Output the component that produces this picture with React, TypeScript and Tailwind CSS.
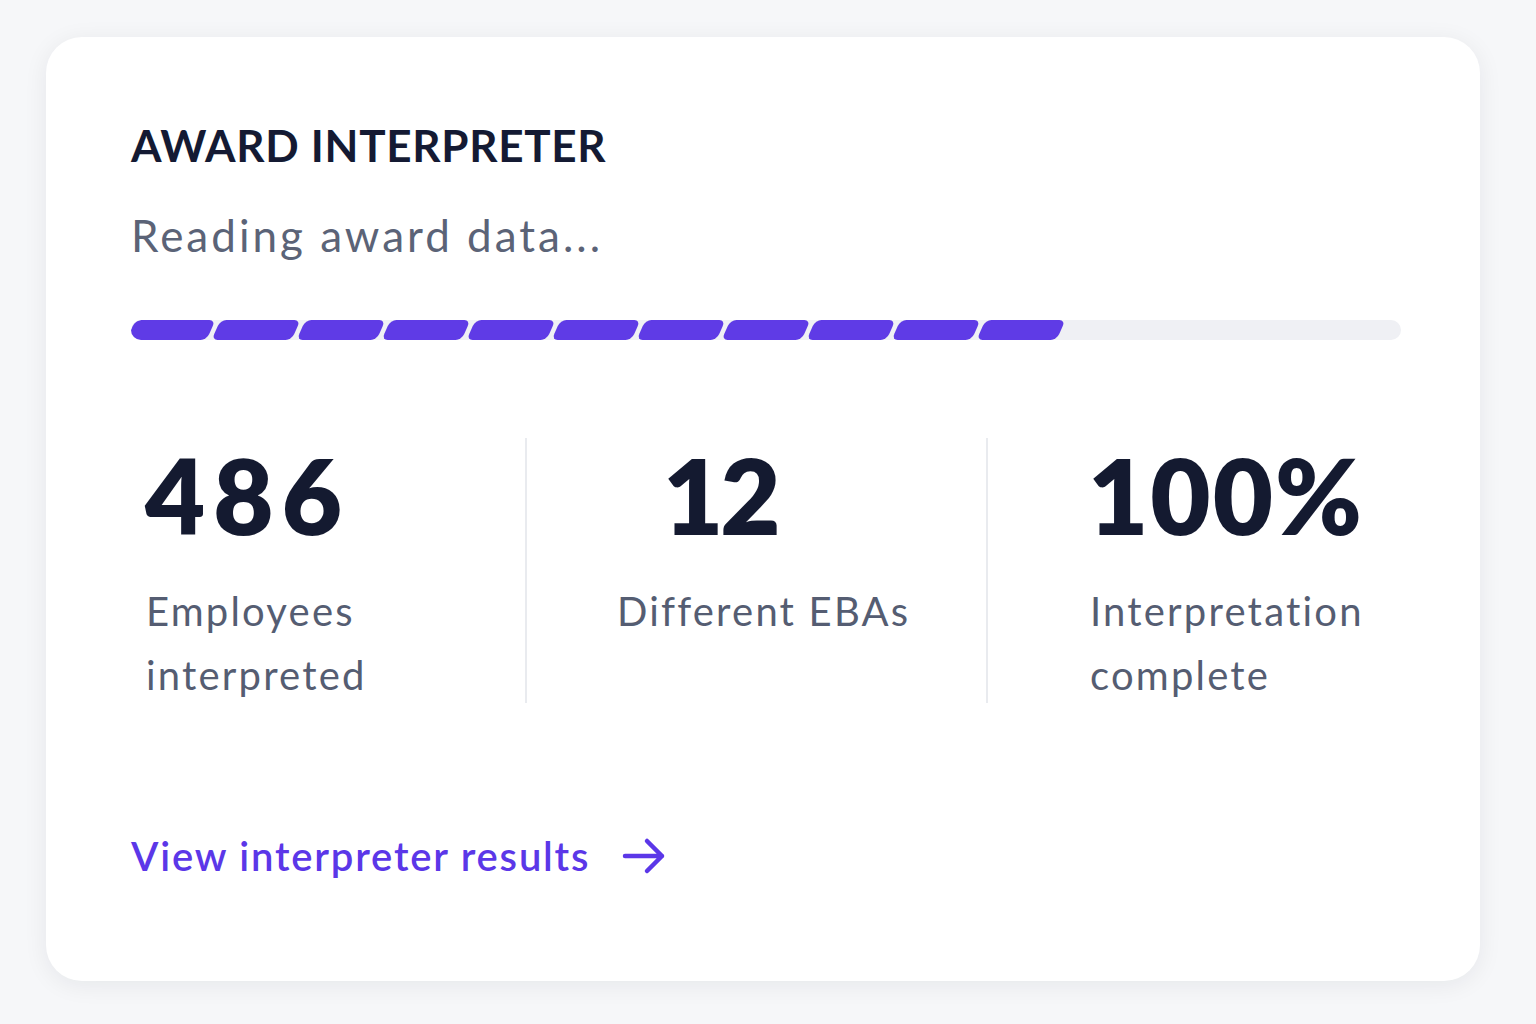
import React from "react";

const segs = Array.from({ length: 11 });

function Stat({
  value,
  lines,
  numCls,
  labelPad,
}: {
  value: string;
  lines: string[];
  numCls: string;
  labelPad: string;
}) {
  return (
    <div className="flex flex-col pt-[5px]">
      <div className={`text-[104px] leading-[104px] font-extrabold text-[#141a30] ${numCls}`}>
        {value}
      </div>
      <div className={`mt-[32px] text-[40px] leading-[64px] tracking-[2.2px] text-[#555d72] ${labelPad}`}>
        {lines.map((l) => (
          <div key={l}>{l}</div>
        ))}
      </div>
    </div>
  );
}

export default function App() {
  return (
    <div
      className="min-h-[1024px] w-[1536px] bg-[#f6f7f9] pt-[37px] pl-[46px]"
      style={{ fontFamily: "Lato, 'Noto Sans', sans-serif" }}
    >
      <div className="w-[1434px] h-[944px] rounded-[36px] bg-white shadow-[0_4px_24px_rgba(20,26,48,0.07)] pt-[86px] pl-[85px] pr-[79px] flex flex-col">
        <div className="text-[44px] leading-[44px] font-bold text-[#141a33] tracking-[0.7px]">
          AWARD INTERPRETER
        </div>
        <div className="mt-[46px] text-[44px] leading-[44px] text-[#5b6377] tracking-[3px]">
          Reading award data...
        </div>
        <div className="mt-[63px] h-[20px] w-[1270px] rounded-full bg-[#eff0f4] overflow-hidden flex gap-[5px]">
          {segs.map((_, i) => (
            <div
              key={i}
              className="h-[20px] w-[80px] shrink-0 rounded-[6px] bg-[#5f3be6] skew-x-[-24deg]"
            />
          ))}
        </div>
        <div className="mt-[98px] flex h-[265px] w-[1270px]">
          <div className="w-[396px] border-r-2 border-[#e9ebef]">
            <Stat value="486" lines={["Employees", "interpreted"]} numCls="pl-[14px] tracking-[8px]" labelPad="pl-[15px]" />
          </div>
          <div className="w-[461px] border-r-2 border-[#e9ebef]">
            <Stat value="12" lines={["Different EBAs"]} numCls="pl-[136px] tracking-[-3px]" labelPad="pl-[90px]" />
          </div>
          <div className="flex-1">
            <Stat value="100%" lines={["Interpretation", "complete"]} numCls="pl-[100px] tracking-[2px]" labelPad="pl-[102px]" />
          </div>
        </div>
        <div className="mt-[133px] flex items-center gap-[32px] text-[40px] leading-[40px] font-semibold text-[#5b37e8] tracking-[1.8px]">
          <span>View interpreter results</span>
          <svg width="44" height="38" viewBox="0 0 44 38" fill="none">
            <path
              d="M3 19H40M25 4L40 19L25 34"
              stroke="#5b37e8"
              strokeWidth="4.5"
              strokeLinecap="round"
              strokeLinejoin="round"
            />
          </svg>
        </div>
      </div>
    </div>
  );
}
